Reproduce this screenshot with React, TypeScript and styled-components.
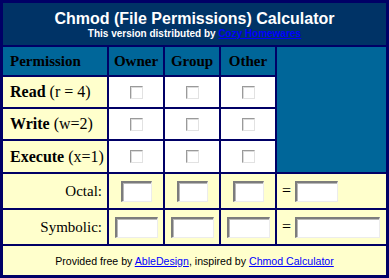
import React from "react";
import styled, { createGlobalStyle } from "styled-components";

const Global = createGlobalStyle`
  html, body { margin: 0; padding: 0; background: #ffffff; }
  body { font-family: "Liberation Serif", "Times New Roman", serif; }
`;

const Calculator = styled.div`
  display: grid;
  grid-template-columns: 104px 54px 54px 54px 109px;
  grid-template-rows: 42px 28px 30px 30px 31px 34px 34px 29px;
  gap: 2px;
  padding: 3px;
  width: 389px;
  height: 278px;
  box-sizing: border-box;
  background: #000066;
`;

const TitleCell = styled.div`
  grid-column: 1 / -1;
  background: #003366;
  color: #ffffff;
  font-family: "Liberation Sans", Arial, sans-serif;
  font-weight: bold;
  text-align: center;
  padding-top: 7px;
  box-sizing: border-box;
`;

const Title = styled.div`
  font-size: 16px;
  line-height: 18px;
`;

const Subtitle = styled.div`
  font-size: 10px;
  line-height: 12px;
`;

const Link = styled.a`
  color: #0000ff;
  text-decoration: underline;
`;

const HeaderCell = styled.div<{ $align?: "left" | "center" }>`
  background: #006699;
  color: #000000;
  font-weight: bold;
  font-size: 15px;
  display: flex;
  align-items: center;
  justify-content: ${(p) => (p.$align === "left" ? "flex-start" : "center")};
  padding-left: ${(p) => (p.$align === "left" ? "7px" : "0")};
`;

const SideFill = styled.div`
  grid-column: 5;
  grid-row: 2 / 6;
  background: #006699;
`;

const LabelCell = styled.div`
  background: #ffffcc;
  color: #000000;
  font-size: 16px;
  display: flex;
  align-items: center;
  padding-left: 7px;
  white-space: pre;
`;

const CheckCell = styled.div`
  background: #ffffff;
  display: flex;
  align-items: center;
  justify-content: center;
`;

const Checkbox = styled.input`
  appearance: none;
  -webkit-appearance: none;
  margin: 0;
  width: 13px;
  height: 13px;
  box-sizing: border-box;
  background: #ffffff;
  border-style: solid;
  border-width: 1px;
  border-color: #9a9a9a #e2e2e2 #e2e2e2 #9a9a9a;
  box-shadow: inset 1px 1px 0 #dcdcdc;
`;

const FieldLabelCell = styled.div`
  background: #ffffcc;
  color: #000000;
  font-size: 15px;
  display: flex;
  align-items: center;
  justify-content: flex-end;
  padding-right: 5px;
`;

const FieldCell = styled.div`
  background: #ffffcc;
  display: flex;
  align-items: center;
  justify-content: center;
`;

const ResultCell = styled.div`
  background: #ffffcc;
  display: flex;
  align-items: center;
  padding-left: 5px;
  gap: 4px;
  font-size: 16px;
  color: #000000;
`;

const Field = styled.input<{ $w: number }>`
  margin: 0;
  padding: 0;
  width: ${(p) => p.$w}px;
  height: 21px;
  box-sizing: border-box;
  background: #ffffff;
  border-style: solid;
  border-width: 2px 1px 1px 2px;
  border-color: #7c7c7c #ececec #ececec #7c7c7c;
  box-shadow: inset 1px 1px 0 #b8b8b8;
  outline: none;
`;

const Footer = styled.div`
  grid-column: 1 / -1;
  background: #ffffcc;
  color: #000000;
  font-family: "Liberation Sans", Arial, sans-serif;
  font-size: 10.6px;
  display: flex;
  align-items: center;
  justify-content: center;
`;

const perms = [
  { name: "Read", note: " (r = 4)" },
  { name: "Write", note: " (w=2)" },
  { name: "Execute", note: " (x=1)" },
];

const groups = ["Owner", "Group", "Other"];

export default function App() {
  return (
    <>
      <Global />
      <Calculator>
        <TitleCell>
          <Title>Chmod (File Permissions) Calculator</Title>
          <Subtitle>
            This version distributed by <Link href="#">Cozy Homewares</Link>
          </Subtitle>
        </TitleCell>

        <HeaderCell $align="left">Permission</HeaderCell>
        {groups.map((g) => (
          <HeaderCell key={g}>{g}</HeaderCell>
        ))}
        <SideFill />

        {perms.map((p) => (
          <React.Fragment key={p.name}>
            <LabelCell>
              <b>{p.name}</b>
              {p.note}
            </LabelCell>
            {groups.map((g) => (
              <CheckCell key={g}>
                <Checkbox type="checkbox" aria-label={`${g} ${p.name}`} />
              </CheckCell>
            ))}
          </React.Fragment>
        ))}

        <FieldLabelCell>Octal:</FieldLabelCell>
        {groups.map((g) => (
          <FieldCell key={g}>
            <Field $w={31} type="text" />
          </FieldCell>
        ))}
        <ResultCell>
          =<Field $w={43} type="text" />
        </ResultCell>

        <FieldLabelCell>Symbolic:</FieldLabelCell>
        {groups.map((g) => (
          <FieldCell key={g}>
            <Field $w={43} type="text" />
          </FieldCell>
        ))}
        <ResultCell>
          =<Field $w={85} type="text" />
        </ResultCell>

        <Footer>
          <span>
            Provided free by <Link href="#">AbleDesign</Link>, inspired by{" "}
            <Link href="#">Chmod Calculator</Link>
          </span>
        </Footer>
      </Calculator>
    </>
  );
}
